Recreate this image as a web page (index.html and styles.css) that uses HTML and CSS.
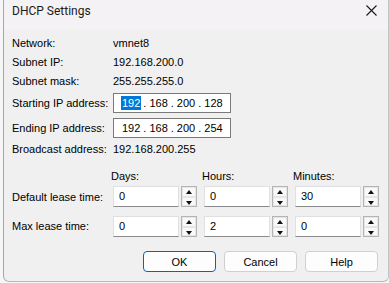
FILE: index.html
```html
<!DOCTYPE html>
<html lang="en">
<head>
    <meta charset="UTF-8">
    <meta name="viewport" content="width=device-width, initial-scale=1.0">
    <title>DHCP Settings</title>
    <link rel="stylesheet" href="styles.css">
</head>
<body>

    <div class="window">
        <!-- Title bar -->
        <div class="titlebar">
            <span class="title">DHCP Settings</span>
            <span class="close">
                <svg width="11" height="11" viewBox="0 0 11 11">
                    <path d="M0.5 0.5 L10.5 10.5 M10.5 0.5 L0.5 10.5" stroke="#1a1a1a" stroke-width="1.1" fill="none"/>
                </svg>
            </span>
        </div>

        <div class="content">
            <!-- Network info -->
            <div class="info">
                <div class="label">Network:</div>
                <div class="value">vmnet8</div>

                <div class="label">Subnet IP:</div>
                <div class="value">192.168.200.0</div>

                <div class="label">Subnet mask:</div>
                <div class="value">255.255.255.0</div>

                <div class="label">Starting IP address:</div>
                <div class="value">
                    <div class="ipbox">
                        <span class="octet selected">192</span><span class="dot">.</span><span class="octet">168</span><span class="dot">.</span><span class="octet">200</span><span class="dot">.</span><span class="octet">128</span>
                    </div>
                </div>

                <div class="label">Ending IP address:</div>
                <div class="value">
                    <div class="ipbox">
                        <span class="octet">192</span><span class="dot">.</span><span class="octet">168</span><span class="dot">.</span><span class="octet">200</span><span class="dot">.</span><span class="octet">254</span>
                    </div>
                </div>

                <div class="label">Broadcast address:</div>
                <div class="value">192.168.200.255</div>
            </div>

            <!-- Lease times -->
            <div class="times">
                <div></div>
                <div class="head">Days:</div>
                <div class="head">Hours:</div>
                <div class="head">Minutes:</div>

                <div class="label row-label first">Default lease time:</div>
                <div class="spin"><div class="spin-input">0</div><div class="spin-btns"><span class="up"></span><span class="down"></span></div></div>
                <div class="spin"><div class="spin-input">0</div><div class="spin-btns"><span class="up"></span><span class="down"></span></div></div>
                <div class="spin"><div class="spin-input">30</div><div class="spin-btns"><span class="up"></span><span class="down"></span></div></div>

                <div class="label row-label">Max lease time:</div>
                <div class="spin"><div class="spin-input">0</div><div class="spin-btns"><span class="up"></span><span class="down"></span></div></div>
                <div class="spin"><div class="spin-input">2</div><div class="spin-btns"><span class="up"></span><span class="down"></span></div></div>
                <div class="spin"><div class="spin-input">0</div><div class="spin-btns"><span class="up"></span><span class="down"></span></div></div>
            </div>

            <!-- Buttons -->
            <div class="buttons">
                <button class="btn default">OK</button>
                <button class="btn">Cancel</button>
                <button class="btn">Help</button>
            </div>
        </div>
    </div>

</body>
</html>
```

FILE: styles.css
```css
* {
    margin: 0;
    padding: 0;
    box-sizing: border-box;
}

body {
    font-family: "Liberation Sans", Arial, sans-serif;
    font-size: 11px;
    color: #000;
    background-color: #f6f6f6;
    width: 389px;
    height: 283px;
    overflow: hidden;
}

.window {
    margin-left: 3px;
    width: 386px;
    height: 282px;
    background-color: #f0f0f0;
    border-left: 1px solid #a8a8a8;
    border-right: 1px solid #c4c4c4;
    border-bottom: 1px solid #b8b8b8;
    border-radius: 0 0 6px 6px;
}

.titlebar {
    height: 30px;
    display: flex;
    align-items: center;
    justify-content: space-between;
    padding: 0 9px 0 8px;
    background-color: #f4f2f4;
}

.title {
    font-family: Roboto, "Liberation Sans", sans-serif;
    font-size: 12px;
    color: #1a1a1a;
    padding-bottom: 8px;
}

.close {
    display: flex;
    padding-bottom: 9px;
    margin-right: 2px;
}

.content {
    padding: 3px 10px 0 8px;
}

/* Info block */
.info {
    display: grid;
    grid-template-columns: 101px 1fr;
    grid-template-rows: 19px 19px 19px 25px 25px 17px;
    align-items: center;
}

.label {
    white-space: nowrap;
}

.ipbox {
    width: 118px;
    height: 20px;
    background-color: #fff;
    border: 1px solid #7a7a7a;
    display: flex;
    align-items: center;
    padding-left: 7px;
}

.octet {
    display: inline-block;
    line-height: 14px;
    padding: 0 1px;
}

.octet.selected {
    background-color: #0078d7;
    color: #fff;
}

.dot {
    margin: 0 2px;
}

/* Lease times */
.times {
    margin-top: 10px;
    display: grid;
    grid-template-columns: 94px 84px 84px 84px;
    grid-template-rows: 19px 30px 30px;
    column-gap: 7px;
}

.head {
    margin-left: -2px;
    line-height: 18px;
}

.row-label {
    line-height: 21px;
}

.row-label.first {
    padding-top: 1px;
}

.spin {
    display: flex;
    height: 21px;
    gap: 2px;
}

.spin-input {
    flex: 1;
    background-color: #fff;
    border: 1px solid #e0e0e0;
    border-bottom-color: #8a8a8a;
    padding: 2px 0 0 5px;
    line-height: 14px;
}

.spin-btns {
    width: 16px;
    display: flex;
    flex-direction: column;
    border: 1px solid #b4b4b4;
    background-color: #f7f7f7;
}

.spin-btns span {
    flex: 1;
    position: relative;
    background-color: #f9f9f9;
    border: 1px solid #e6e6e6;
}

.spin-btns .up::after,
.spin-btns .down::after {
    content: "";
    position: absolute;
    left: 3px;
    top: 2px;
    border-left: 3.5px solid transparent;
    border-right: 3.5px solid transparent;
}

.spin-btns .up::after {
    border-bottom: 4px solid #111;
}

.spin-btns .down::after {
    top: 3px;
    border-top: 4px solid #111;
}

/* Buttons */
.buttons {
    margin-top: 5px;
    display: flex;
    justify-content: flex-end;
    gap: 8px;
}

.btn {
    width: 73px;
    height: 21px;
    font-family: "Liberation Sans", Arial, sans-serif;
    font-size: 11px;
    color: #000;
    background-color: #fdfdfd;
    border: 1px solid #d0d0d0;
    border-radius: 4px;
}

.btn.default {
    border: 1px solid #0067c0;
    box-shadow: inset 0 0 0 1px #ffffff;
}
```
